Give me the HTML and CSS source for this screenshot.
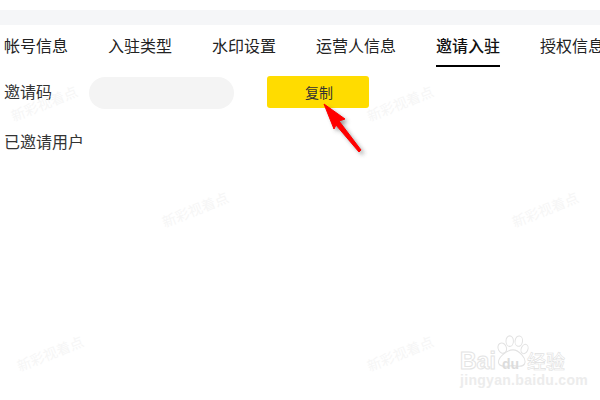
FILE: index.html
```html
<!DOCTYPE html>
<html lang="zh">
<head>
<meta charset="utf-8">
<title>邀请入驻</title>
<link rel="stylesheet" href="styles.css">
</head>
<body>
<div class="page">
  <div class="band"></div>
  <nav class="tabs">
    <span class="tab">帐号信息</span>
    <span class="tab">入驻类型</span>
    <span class="tab">水印设置</span>
    <span class="tab">运营人信息</span>
    <span class="tab active">邀请入驻</span>
    <span class="tab">授权信息</span>
  </nav>
  <div class="code-row">
    <span class="label">邀请码</span>
    <div class="code-input"></div>
    <button class="copy">复制</button>
  </div>
  <div class="invited">已邀请用户</div>

  <span class="wm wm1">新彩视着点</span>
  <span class="wm wm2">新彩视着点</span>
  <span class="wm wm3">新彩视着点</span>
  <span class="wm wm4">新彩视着点</span>
  <span class="wm wm5">新彩视着点</span>
  <span class="wm wm6">新彩视着点</span>

  <svg class="arrow" width="60" height="70" viewBox="0 0 60 70">
    <defs><filter id="sh" x="-30%" y="-30%" width="170%" height="170%"><feGaussianBlur stdDeviation="2"/></filter></defs>
    <path transform="translate(3 3)" d="M2 2 L23 17 L17 19 L39 48 L37 50 L14 23 L12 27 Z" fill="#444" opacity=".55" filter="url(#sh)"/>
    <path d="M2 2 L23 17 L17 19 L39 48 L37 50 L14 23 L12 27 Z" fill="#f00" stroke="#f00" stroke-width="1" stroke-linejoin="round"/>
  </svg>

  <div class="baidu">
    <svg class="paw" width="38" height="35" viewBox="0 0 46 40" preserveAspectRatio="none">
      <g fill="#fff" stroke="#e2e2e2" stroke-width="1.2">
        <ellipse cx="10" cy="15" rx="5" ry="6" transform="rotate(-30 10 15)"/>
        <ellipse cx="19" cy="7" rx="4.5" ry="6"/>
        <ellipse cx="30" cy="7" rx="4.5" ry="6" transform="rotate(10 30 7)"/>
        <ellipse cx="37" cy="16" rx="4" ry="5.5" transform="rotate(25 37 16)"/>
        <path d="M23 17 C30 17 40 27 37 33 C34 38 28 35 23 35 C18 35 9 38 6 33 C3 27 15 17 23 17 Z"/>
      </g>
    </svg>
    <div class="brand-line">
      <span class="bai">Bai</span><span class="du">du</span><span class="jy">经验</span>
    </div>
    <div class="site">jingyan.baidu.com</div>
  </div>
</div>
</body>
</html>
```
FILE: styles.css
```css
* { box-sizing: border-box; }
html, body { margin: 0; padding: 0; }
body {
  width: 600px;
  height: 400px;
  overflow: hidden;
  background: #fff;
  font-family: "Noto Sans CJK SC", "Liberation Sans", sans-serif;
}
.page {
  position: relative;
  width: 600px;
  height: 400px;
  overflow: hidden;
  padding-top: 10px;
}
.band { height: 15px; background: #f5f6f8; }
.tabs {
  display: flex;
  gap: 40px;
  height: 42px;
  padding-left: 4px;
  white-space: nowrap;
}
.tab {
  flex: none;
  height: 42px;
  padding-top: 9px;
  font-size: 16px;
  line-height: 23px;
  color: #222;
}
.tab.active {
  font-weight: 500;
  color: #111;
  border-bottom: 2px solid #000;
}
.code-row {
  display: flex;
  align-items: flex-start;
  margin-top: 9px;
  padding-left: 4px;
}
.label {
  width: 85px;
  font-size: 16px;
  line-height: 32px;
  margin-top: -1px;
  color: #333;
}
.code-input {
  width: 145px;
  height: 32px;
  margin-top: 1px;
  border-radius: 16px;
  background: #f4f4f4;
}
.copy {
  width: 102px;
  height: 32px;
  margin-left: 33px;
  padding: 0 0 0 2px;
  border: 0;
  border-radius: 3px;
  background: #ffdc00;
  font-family: inherit;
  font-size: 14px;
  color: #333;
}
.invited {
  margin-top: 21px;
  padding-left: 4px;
  font-size: 16px;
  line-height: 23px;
  color: #333;
}
.wm {
  position: absolute;
  font-size: 14px;
  line-height: 16px;
  white-space: nowrap;
  color: #f6f6f6;
  transform: rotate(-22deg);
}
.wm1 { left: 9px; top: 95px; }
.wm2 { left: 365px; top: 95px; }
.wm3 { left: 160px; top: 201px; }
.wm4 { left: 510px; top: 201px; }
.wm5 { left: 15px; top: 345px; }
.wm6 { left: 365px; top: 345px; }
.arrow { position: absolute; left: 322px; top: 102px; }
.baidu {
  position: absolute;
  left: 460px;
  top: 335px;
  width: 120px;
  height: 56px;
  color: #fff;
}
.paw { position: absolute; left: 34px; top: 0; }
.brand-line {
  position: absolute;
  left: 0;
  top: 13px;
  display: flex;
  align-items: baseline;
  font-family: "Liberation Sans", sans-serif;
  font-weight: 700;
  font-size: 23px;
  line-height: 26px;
  -webkit-text-stroke: 1px #e4e4e4;
}
.bai { width: 42px; }
.du { position: relative; width: 25px; font-size: 14px; -webkit-text-stroke: 0; color: #dcdcdc; }
.jy {
  font-family: "Noto Sans CJK SC", sans-serif;
  font-size: 19px;
  font-weight: 500;
  -webkit-text-stroke: .6px #e0e0e0;
}
.site {
  position: absolute;
  left: 0;
  top: 37px;
  font-family: "Liberation Sans", sans-serif;
  font-weight: 700;
  font-size: 14px;
  line-height: 16px;
  letter-spacing: .3px;
  white-space: nowrap;
  color: #ececec;
}
```
